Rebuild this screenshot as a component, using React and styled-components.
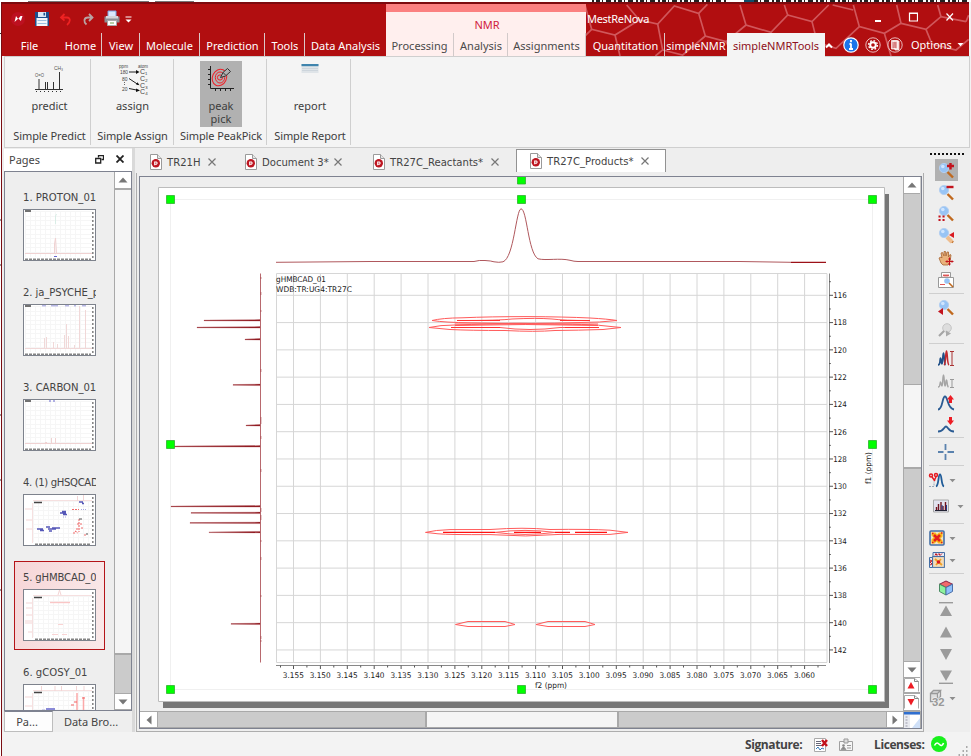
import React from "react";
import styled, { createGlobalStyle, css } from "styled-components";

const Global = createGlobalStyle`
  * { box-sizing: border-box; }
  body { margin: 0; background: #fff; overflow: hidden; }
  svg { display: block; flex: none; }
`;

const ui = `"Noto Sans", "Open Sans", sans-serif`;
const tahoma = `"DejaVu Sans Condensed", "DejaVu Sans", sans-serif`;

/* ---------- window ---------- */
const Desktop = styled.div`
  width: 971px; height: 756px; background: #fff; padding: 2px 0 0 1px;
  position: relative; font-family: ${ui}; font-size: 12px; color: #444;
`;
const Behind = styled.svg`position: absolute; left: 0; top: 0;`;
const Window = styled.div`
  position: relative; height: 754px; width: 970px; display: flex; flex-direction: column;
  background: #f3f3f3; border-left: 1px solid #7a0d12;
`;

/* ---------- title bar ---------- */
const Header = styled.header`
  position: relative; height: 54px; width: 967px; display: flex; background: #b10e10;
  border-top: 2px solid #7d0a0e; flex: none;
`;
const HexPattern = styled.svg`position: absolute; left: 584px; top: 0;`;
const Section = styled.div`
  position: relative; width: ${(p) => p.$w}px; height: 52px; flex: none;
  display: flex; flex-direction: column; background: ${(p) => p.$bg || "transparent"};
  ${(p) => p.$accent && css`border-top: 8px solid #fb8080;`}
`;
const SectionTop = styled.div`flex: 1; display: flex; align-items: center; min-height: 0;`;
const QuickAccess = styled(SectionTop)`padding-left: 8px; gap: 7.400px;`;
const GroupTitle = styled(SectionTop)`
  justify-content: center; color: #d0203c; padding: 4px 0 0 2px; font-size: 11px;
`;
const AppTitle = styled.span`color: #fff; padding-left: 1px; font-size: 11px; letter-spacing: -0.300px; width: 280px;`;
const WinButtons = styled.div`display: flex; align-items: center; gap: 24px;`;
const TabRow = styled.nav`display: flex; height: 23px; flex: none;`;
const Tab = styled.div`
  width: ${(p) => p.$w}px; flex: none; height: ${(p) => (p.$active ? 24 : 23)}px;
  display: flex; align-items: center; justify-content: center; white-space: nowrap;
  padding: 1px 0 0 ${(p) => p.$pl ?? 1}px; font-size: 11px; position: relative;
  color: ${(p) => (p.$active ? "#8e1020" : p.$dark ? "#4a4a4a" : "#fff")};
  background: ${(p) => (p.$active ? "#f4f4f4" : "transparent")};
  border-right: ${(p) => (p.$last ? "0" : p.$dark ? "1px solid #d2caca" : "1px solid #dcc8c8")};
`;
const HeaderTools = styled.div`
  display: flex; align-items: center; flex: 1; color: #fff;
  font-size: 11px;
`;
const OptionsText = styled.span`margin: 0 5px 0 0;`;

/* ---------- ribbon ---------- */
const Ribbon = styled.div`
  height: 92px; width: 966px; margin-left: 2px; flex: none; display: flex;
  background: #f4f4f4; border: 1px solid #cfcfcf;
`;
const RibbonGroup = styled.div`
  width: ${(p) => p.$w}px; height: 86px; margin-top: 2px; border-right: 1px solid #cfcfcf;
  display: flex; flex-direction: column; align-items: center; justify-content: space-between;
  padding: 2px 0 0 ${(p) => p.$pl ?? 1}px; font-size: 11px; white-space: nowrap; color: #3d3d3d;
`;
const RibbonButton = styled.div`
  width: 42px; height: 66px; display: flex; flex-direction: column; align-items: center;
  line-height: 13px; text-align: center; padding-top: 3px;
  background: ${(p) => (p.$active ? "#b1b1b1" : "transparent")};
  svg { margin-bottom: 5px; }
`;
const GroupName = styled.div`line-height: 14px; height: 16px; letter-spacing: -0.100px;`;

/* ---------- body ---------- */
const Body = styled.div`display: flex; height: 584px; width: 968px; flex: none; background: #eee; padding-left: 2px;`;
const Dock = styled.aside`width: 128px; display: flex; flex-direction: column; flex: none; padding-top: 1px;`;
const DockHeader = styled.div`
  height: 22px; background: #fff; display: flex; align-items: center; padding: 0 8px 2px 5px; gap: 12px;
  color: #444; flex: none;
`;
const DockTitle = styled.span`flex: 1; font-size: 11px;`;
const DockList = styled.div`
  height: 540px; border: 1px solid #7e8290; display: flex; overflow: hidden; flex: none; background: #eee;
`;
const Items = styled.div`width: 109px; padding: 9px 0 0 9px; display: flex; flex-direction: column; gap: 6px;`;
const PageItem = styled.div`
  width: 91px; height: 89px; flex: none; padding: 8px 8px 0; border: 1px solid transparent;
  ${(p) => p.$active && css`border-color: #b41418; background: linear-gradient(100deg, #f6d6d8, #fae9e9);`}
`;
const PageLabel = styled.div`
  width: 73px; height: 19px; font: 11.200px/16px ${tahoma};
  letter-spacing: ${(p) => p.$ls || 0}px; white-space: pre; overflow: hidden; color: #444;
`;
const Thumb = styled.div`width: 73px; height: 52px; border: 1px solid #7d828c; background: #fff; overflow: hidden;`;
const DockTabs = styled.div`height: 21px; display: flex; font-size: 11px; color: #444; align-items: center;`;
const DockTab = styled.div`
  width: ${(p) => p.$w}px; height: 21px; display: flex; align-items: center; justify-content: center;
  ${(p) => p.$active && css`background: #fdfdfd; border: 1px solid #bdbdbd; border-top-color: #7e8290; padding-right: 3px;`}
`;

const VScroll = styled.div`width: ${(p) => p.$w}px; display: flex; flex-direction: column; background: #cbcbcb; border-left: 1px solid #a9a9a9; flex: none;`;
const ScrollButton = styled.div`
  width: ${(p) => p.$w || 16}px; height: ${(p) => p.$h || 17}px; background: #fff; border: solid #a9a9a9; flex: none;
  border-width: ${(p) => p.$bw || "0 0 1px"}; display: flex; align-items: center; justify-content: center;
`;
const Rail = styled.div`height: ${(p) => p.$h}; width: ${(p) => p.$w || "auto"}; flex: none;`;
const Handle = styled.div`
  height: ${(p) => p.$h}; width: ${(p) => p.$w || "auto"}; flex: none; background: #f5f5f5;
  border: solid #a9a9a9; border-width: ${(p) => (p.$horizontal ? "0 2px" : "1px 0 2px")};
`;

const Splitter = styled.div`width: 3px; background: #d9d9d9; flex: none;`;
const Center = styled.main`width: 789px; display: flex; flex-direction: column; padding-left: 1px; flex: none;`;
const DocTabs = styled.div`height: 25px; display: flex; align-items: flex-end; padding-left: 5px; flex: none;`;
const DocTab = styled.div`
  width: ${(p) => p.$w}px; height: ${(p) => (p.$active ? 23 : 25)}px; display: flex; align-items: center;
  padding: ${(p) => (p.$active ? "0 0 1px 13px" : "3px 0 0 9px")}; gap: 5px; font: 11.200px ${tahoma}; flex: none;
  margin-bottom: ${(p) => (p.$active ? 1 : 0)}px; white-space: nowrap; color: #444;
  ${(p) => p.$active && css`background: #fff; border: 1px solid #929292; border-bottom: 0;`}
`;
const DocName = styled.span`width: ${(p) => p.$w}px; padding-top: 1px;`;
const OuterFrame = styled.div`
  height: 559px; width: 788px; border: solid #adadad; border-width: 0 1px 1px; padding: 3px 1px 2px 2px; flex: none;
`;
const Viewport = styled.div`
  width: 783px; height: 553px; border: 1px solid #7e8290; display: grid;
  grid-template-columns: 763px 18px; grid-template-rows: 534px 17px;
`;
const HScroll = styled.div`display: flex; background: #cbcbcb; border-top: 1px solid #a9a9a9; border-bottom: 1px solid #a9a9a9;`;
const Corner = styled.div`background: #fff; border: solid #a9a9a9; border-width: 1px 1px 0; display: flex; overflow: hidden;`;

const SideBar = styled.div`width: 44px; display: flex; flex-direction: column; padding-top: 5px; flex: none;`;
const Grip = styled.div`
  height: 6px; width: 34px; margin-left: 6px; flex: none;
  background: repeating-linear-gradient(90deg, #111 0 2px, transparent 2px 4px) 0 0 / 100% 2px no-repeat;
`;
const Tool = styled.div`height: ${(p) => p.$h || 22}px; width: 44px; display: flex; align-items: center; padding-left: ${(p) => (p.$menu ? (p.$wide ? 6 : 2) : 11)}px; flex: none; gap: ${(p) => (p.$wide ? 4 : 0)}px;`;
const ToolFace = styled.div`
  width: 23px; height: 22px; display: flex; align-items: center; justify-content: center; flex: none; padding-right: 1px;
  background: ${(p) => (p.$active ? "#b1b1b1" : "transparent")};
`;
const Divider = styled.div`height: 6px; width: 35px; margin-left: 5px; flex: none; border-top: 2px solid transparent; box-shadow: inset 0 1px #cfcfcf;`;

const Status = styled.footer`
  height: 24px; display: flex; align-items: center; font: bold 12px "Open Sans", sans-serif; color: #444;
  padding: 2px 0 0 743px; flex: none; background: #f3f3f3;
`;
const StatusText = styled.span`letter-spacing: -0.400px; width: ${(p) => p.$w}px; white-space: nowrap; height: 18px; line-height: 18px;`;

/* ---------- small drawings ---------- */
const Arrow = ({ dir = "down", c = "#777" }) => (
  <svg width="10" height="10" viewBox="0 0 10 10">
    <path d={{ up: "M.5 7.5 5 2.5 9.5 7.5z", down: "M.5 2.5 5 7.5 9.5 2.5z", left: "M7.5.5 2.5 5 7.5 9.5z", right: "M2.5.5 7.5 5 2.5 9.5z" }[dir]} fill={c} />
  </svg>
);
const Caret = ({ c = "#8d8d8d" }) => <svg width="7" height="5"><path d="M.5 1h6L3.5 4.2z" fill={c} /></svg>;
const DocIcon = () => (
  <svg width="12" height="16" viewBox="0 0 12 16">
    <path d="M.5.5h7l4 4v11H.5z" fill="#fff" stroke="#9a9a9a" /><path d="M7.5.5v4h4" fill="#e5e5e5" stroke="#9a9a9a" />
    <circle cx="5.8" cy="9.3" r="4.2" fill="#bd1621" /><path d="M4.700 11.200V8h1.700a1.200 1.200 0 0 1 0 2.200H5.200" fill="none" stroke="#fff" strokeWidth="1.100" />
  </svg>
);
const Close = ({ s = 8, c = "#777", w = 1.2 }) => (
  <svg width={s} height={s} viewBox="0 0 8 8"><path d="M.5.5l7 7M7.5.5l-7 7" stroke={c} strokeWidth={w} /></svg>
);
const PageJump = ({ dir }) => (
  <svg width="16" height="14" viewBox="0 0 16 14"><path d="M.5 13.5V.5h10l4 3v10" fill="#fff" stroke="#aaa" /><path d="M10.5.5v3h4" fill="none" stroke="#888" />
    <path d={dir === "up" ? "M3.5 10.5 7 4l3.5 6.5z" : "M3.5 4 7 10.5 10.5 4z"} fill="#ed1c24" /></svg>
);

const HEX = [
  "-183,15 -163,88 -93,105 -20,60 35,72 85,18 158,40 178,108 240,125", "-93,105 -78,168", "-20,60 -58,15", "-163,88 -183,108",
  "35,72 50,150 28,168", "50,150 110,165 178,108", "158,40 184,13", "282,15 300,75 375,97 425,45 415,15", "300,75 240,125 262,168",
  "425,45 498,65 548,15", "498,65 514,128 570,145 640,80", "622,15 640,80 715,100 765,70 752,15", "715,100 735,168",
  "765,70 840,88 885,50 960,65", "840,88 858,132 930,150 968,118", "885,50 875,15", "375,97 392,168", "960,65 968,45", "622,30 560,15",
];
const Quick = () => (
  <>
    <svg width="16" height="18" viewBox="0 0 16 18"><circle cx="8" cy="9" r="7" fill="#bd1020" /><path d="M4.5 12 6 6l2.2 3L10.5 6l2 0-1.6 5-2.5-2.5z" fill="#fff" /></svg>
    <svg width="16" height="16" viewBox="-1 0 16 16"><path d="M1 1h14v14H1z" fill="#1d4f8c" /><path d="M4 1h8v5H4z" fill="#d9e8f6" /><path d="M9.5 1.8h1.6v2.700H9.5z" fill="#1d4f8c" /><path d="M2.500 7h11V15h-11z" fill="#f3f7fb" /><path d="M3.500 9.500h9M3.500 12.500h9" stroke="#9bc0e0" /></svg>
    <svg width="16" height="16" viewBox="-1 0 16 16"><path d="M3 6.500h6c4 0 3.500 5 0 7.500M6.500 3 3 6.500l3.500 3.200" fill="none" stroke="#ee2222" strokeWidth="1.800" /></svg>
    <svg width="16" height="16" viewBox="0 0 16 16"><path d="M12 6.500H8C3.500 6.500 3.500 11 6.500 13.500M9 3l3.500 3.500L9 10" fill="none" stroke="#b9a3a3" strokeWidth="1.800" /></svg>
    <svg width="28" height="17" viewBox="0 0 28 17"><path d="M4 1h8v6H4z" fill="#dbe9fb" stroke="#7aa3dd" /><path d="M.5 6.500h15v6H.5z" fill="#8c8f94" /><path d="M2 6h12v2.500H2z" fill="#d4d6d9" /><path d="M3.500 10.500h9v5h-9z" fill="#fff" stroke="#aaa" /><path d="M6 13h4" stroke="#70a050" /><path d="M21.500 7h6" stroke="#fff" /><path d="M21.500 9.500h6l-3 3z" fill="#fff" /></svg>
  </>
);

const PredictIcon = () => (
  <svg width="32" height="30" viewBox="0 0 32 30">
    <g stroke="#333" fill="none"><path d="M1 25.500h28M5 15v10M11.500 25v-7M13.500 25v-7M19.500 18v7M25.500 8v17" /><path d="M2 27.500h26" strokeDasharray="1 3" /></g>
    <g fill="#555" fontFamily="Liberation Sans" fontSize="6"><text x="1" y="13" textLength="9" lengthAdjust="spacingAndGlyphs">O=O</text><text x="20" y="6" textLength="9" lengthAdjust="spacingAndGlyphs">CH₃</text></g>
  </svg>
);
const AssignIcon = () => (
  <svg width="32" height="30" viewBox="0 0 32 30" overflow="visible">
    <g fill="#444" fontFamily="Liberation Sans" fontSize="5"><text x="2" y="3.500" textLength="9" lengthAdjust="spacingAndGlyphs">ppm</text><text x="21" y="3.500" textLength="10" lengthAdjust="spacingAndGlyphs">atom</text><text x="3" y="10" textLength="8" lengthAdjust="spacingAndGlyphs">180</text><text x="5" y="17">80</text><text x="5" y="27">20</text>
      <g fontSize="7"><text x="23" y="10">C₁</text><text x="23" y="17">C₂</text><text x="23" y="23.500">C₃</text><text x="23" y="30">C₄</text></g></g>
    <path d="M12 8h9M12 14.500l9 6M12 24.500l10 2" stroke="#222" fill="none" /><path d="M19 6l3.500 2-3.500 2zM19 20.500l3.500.800-2-3zM19 24.500l4 2-4 1.500z" fill="#111" /><path d="M7.500 18v4" stroke="#666" strokeDasharray="1 1" />
  </svg>
);
const PickIcon = () => (
  <svg width="28" height="30" viewBox="0 0 28 30">
    <path d="M3.500 2v22.500H27M1 5.500h2M1 10.500h2M1 15.500h2M1 20.500h2M8.500 25v2M13.500 25v2M18.500 25v2M23.500 25v2" stroke="#222" fill="none" />
    <g fill="none" stroke="#f02028"><ellipse cx="12.500" cy="13.500" rx="7" ry="8.500" transform="rotate(25 12.500 13.500)" /><ellipse cx="13" cy="13.500" rx="4.700" ry="5.500" /><circle cx="13" cy="13.500" r="2.600" /></g>
    <path d="M13.500 13.500l2.500-5 4.500-4 3 3-5 4.500z" fill="#b1b1b1" stroke="#333" /><path d="M16 8.500l3 3" stroke="#333" />
  </svg>
);
const ReportIcon = () => (
  <svg width="18" height="30" viewBox="0 0 18 30"><path d="M.5 0h17v9H.5z" fill="#dfe4e8" /><path d="M.5 0h17v2.200H.5z" fill="#3f84ad" /><path d="M1 4.500h16M1 6.500h16" stroke="#cdd5dc" /></svg>
);

const Lens = ({ x = 7, y = 6 }) => (
  <g><path d={`M${x + 3.500} ${y + 4}l5.500 5.500`} stroke="#c0691e" strokeWidth="2.400" /><circle cx={x} cy={y} r="4.600" fill="#98c4f5" stroke="#b4cff0" /><circle cx={x - 1.200} cy={y - 1.500} r="1.800" fill="#cfe5ff" /></g>
);
const icons = {
  zoomIn: <><Lens x={6} y={6} /><path d="M12.500 1v6.500M9 4h7" stroke="#c3131d" strokeWidth="2.400" /></>,
  zoomOut: <><Lens x={6} y={6} /><path d="M8.500 3h7" stroke="#c3131d" strokeWidth="2.400" /></>,
  zoomFit: <><Lens x={6} y={5} /><g fill="none" stroke="#c3131d"><path d="M.5 10.500h2.500M4.500 10.500h2.500M.5 14h2.500M4.500 14h2.500" strokeWidth="2" strokeDasharray="1.800 .400" /></g></>,
  zoomPick: <><Lens x={6} y={5} /><path d="M9 9l5 5" stroke="#efbd8e" strokeWidth="4" /><path d="M11 7l5-3v6z" fill="#d91a20" /></>,
  pan: <><path d="M3 13 1 8l2-1 1 1-1-5 1.500-.500L6 6V1.500h1.500L8 6l1-4h1.500L10.500 7l1.500-2.500 1 .500-1 7-2 3H5z" fill="#e9b27c" stroke="#a76532" strokeWidth=".8" /><path d="M11.500 7.500v8M7.500 11.500h8M10.300 9h2.400M10.300 14h2.400M9 10.300v2.400M14 10.300v2.400" stroke="#c3131d" /></>,
  inset: <><path d="M3.500 6V.500h9V6M.500 5.500h15v10H.500z" fill="#fff" stroke="#999" /><path d="M5 4.500l1-2 1 2 1-2 1 2 1-2 1 2M2 12.500h5" fill="none" stroke="#d55" /><circle cx="9" cy="9" r="2.800" fill="#98c4f5" /><path d="M11 11l4 4" stroke="#c0691e" strokeWidth="1.600" /></>,
  prev: <><Lens x={6} y={5} /><path d="M0 11.500l5-3.500v7z" fill="#c3131d" /></>,
  next: <><circle cx="9" cy="6" r="4.300" fill="#ddd" stroke="#c5c5c5" /><path d="M6 9l-5 5" stroke="#a5a5a5" strokeWidth="2.200" /><path d="M13 11.500l-5-3v6z" fill="#aaa" /></>,
  full: <><path d="M0 15c3 0 1.500-7 2.500-7s.500 6 1.500 6 .500-11 1.500-11 .500 11 2 12" fill="none" stroke="#1f4f87" strokeWidth="1.600" /><path d="M6 15c2-1 1.500-14 2.500-14s.500 13 2.500 14" fill="none" stroke="#c3272d" strokeWidth="1.600" /><path d="M12 1.500h4M12 15.500h4M14 1v14" stroke="#a33" /></>,
  fit: <><path d="M0 15c3 0 1.500-5 2.500-5s.500 4 1.500 4 .500-11 1.500-11 .500 11 1.500 11 .500-6 1.500-6 0 6 2 7" fill="none" stroke="#a5a5a5" strokeWidth="1.400" /><path d="M12 7.500h4M12 15.500h4M14 7v8" stroke="#999" /></>,
  up: <><path d="M0 15.500c5 0 4-13 7-13s2 12 9 13" fill="none" stroke="#2a5b93" strokeWidth="1.800" /><path d="M9 5.500 12.500 1 16 5.500h-2V9h-3V5.500z" fill="#ed1c24" /></>,
  down: <><path d="M0 15.500c6 0 6-5 8-5s2 5 8 5" fill="none" stroke="#2a5b93" strokeWidth="1.800" /><path d="M9 4.500 12.500 9 16 4.500h-2V1h-3v3.500z" fill="#ed1c24" /></>,
  cross: <path d="M7.500 0v6M7.500 10v6M0 8h5.500M9.500 8H16" stroke="#5a82ae" strokeWidth="1.800" />,
  phase: <><path d="M0 14.500h5v-5" fill="none" stroke="#99a8b8" strokeDasharray="2 1" /><g fill="none" stroke="#e51b23" strokeWidth="1.500"><circle cx="2" cy="3.500" r="1.500" /><circle cx="7" cy="3" r="1.500" /><path d="M3 5l3 4M7 5 5 9" /></g><path d="M7 14.500c3-1 2-12 4-12s1 11 4 12" fill="none" stroke="#1f5b98" strokeWidth="1.800" /></>,
  stack: <><path d="M.5 2h15v12H.5z" fill="#e2e2ee" stroke="#aaa" /><path d="M3.500 12V9M5.500 12V6M8 12V4M10 12V8M12.500 12V4" stroke="#701420" strokeWidth="1.400" /><path d="M2 12.500h12" stroke="#223" /><path d="M9 7v5M13.500 7v5" stroke="#223b8a" /></>,
  contour: <><rect x="1" y="1" width="14" height="14" rx="1" fill="#f3e2c8" stroke="#456fa5" strokeWidth="1.600" /><path d="M2.500 2.500h4l1.500 2 2-2h3.500v4l-2 2 2 2v3h-4l-2-2-2 2h-3v-4l2-2-2-2z" fill="#f8b818" /><path d="M5 5l6 6M11 5l-6 6" stroke="#e21d1d" strokeWidth="2.600" /><path d="M12 3h1.500M3 12.500h1.500M3 3.500h1.500M12 12.500h1.500" stroke="#e21d1d" strokeWidth="1.500" /></>,
  map: <><rect x="3.600" y="4.600" width="11.800" height="10.800" fill="#f4dcb8" stroke="#456fa5" /><path d="M.5 5.500h3v10h-3zM4 .5h11.500v4H4z" fill="#e6eaf4" stroke="#456fa5" /><path d="M6 3.500l1-2 1 2 2-2 1 2 2-2M1 8l2 1-2 1 2 2-2 1" fill="none" stroke="#c21824" /><path d="M6 7l7 6M12 7l-5 6" stroke="#f0a024" strokeWidth="1.800" /><circle cx="9.500" cy="10" r="1.800" fill="#d91a20" /></>,
  cube: <><path d="M8 1l6.500 3.200L8 7.500 1.500 4.200z" fill="#f36a6a" stroke="#824" /><path d="M1.500 4.200 8 7.500v7.500l-6.500-3.500z" fill="#8df29d" stroke="#498a63" /><path d="M14.500 4.200 8 7.500v7.500l6.500-3.500z" fill="#8fc0fb" stroke="#4c6fa8" /></>,
  first: <><path d="M1 .700h14" stroke="#9b9b9b" strokeWidth="1.400" /><path d="M2 14 8 3.500 14 14z" fill="#9b9b9b" /></>,
  prior: <path d="M2 13.500 8 2.500l6 11z" fill="#9b9b9b" />,
  later: <path d="M2 3 8 14 14 3z" fill="#9b9b9b" />,
  last: <><path d="M1 15.300h14" stroke="#9b9b9b" strokeWidth="1.400" /><path d="M2 2.500 8 13l6-10.500z" fill="#9b9b9b" /></>,
  cube32: <><path d="M1.500 3.500h7v8h-7zM1.500 3.500l3-3h7l-3 3M11.500.5v6l-3 4" fill="#ddd" stroke="#999" strokeWidth="1.300" /><text x="3" y="15.500" fontFamily="Liberation Sans" fontWeight="bold" fontSize="10" fill="#999" stroke="#eee" strokeWidth="1.500" paintOrder="stroke" textLength="12.500" lengthAdjust="spacingAndGlyphs">32</text></>,
};
const TOOLS = [
  ["zoomIn", { active: true }], ["zoomOut"], ["zoomFit"], ["zoomPick"], ["pan"], ["inset"], null,
  ["prev"], ["next"], null, ["full"], ["fit"], ["up"], ["down"], null, ["cross"], null,
  ["phase", { menu: true }], ["stack", { menu: true, wide: true, h: 30 }], null, ["contour", { menu: true }], ["map", { menu: true }], null,
  ["cube"], ["first"], ["prior"], ["later"], ["last"], ["cube32", { menu: true }],
];
const SideTool = ({ name, opts = {} }) => (
  <Tool $h={opts.h} $menu={opts.menu} $wide={opts.wide}>
    <ToolFace $active={opts.active}><svg width="16" height="16" viewBox="0 0 16 16" overflow="visible">{icons[name]}</svg></ToolFace>
    {opts.menu && <Caret />}
  </Tool>
);

/* ---------- thumbnails ---------- */
const ThumbGrid = ({ inset }) => {
  const x0 = inset ? 9 : 1, y0 = inset ? 6 : 1;
  return (
    <g>
      <path d={Array.from({ length: 12 }, (_, i) => `M${x0 + i * 5 + 0.5} ${y0}V47`).join("") + Array.from({ length: inset ? 9 : 10 }, (_, i) => `M${x0} ${y0 + Math.round(i * 4.500) + 0.500}H68`).join("")} stroke="#f6f6f6" />
      <path d="M68.800 2v46" stroke="#555" strokeWidth="1.600" strokeDasharray="2 2" opacity=".7" /><path d={`M${inset ? 11 : 1} 49.200H67`} stroke="#333" strokeWidth="1.400" strokeDasharray="3 1" opacity=".6" />
      <path d={inset ? "M10 7.500h8" : "M1 1h6"} stroke="#444" strokeWidth="1.500" />
      {inset && <path d="M9 5.500H68M8.500 8v40" stroke="#f6e0e0" />}
    </g>
  );
};
const THUMBS = [
  <g><ThumbGrid /><path d="M1 43.500h67M30.500 43V34l1-6 1 15" stroke="#f0d2d2" fill="none" /><path d="M31.500 14V6l1-2" stroke="#d9ede6" fill="none" /><path d="M30 46.500h3" stroke="#66c" /></g>,
  <g><ThumbGrid /><path d="M1 43.500h67M20.500 43V33M22.500 43V32M29.500 43v-6M33.500 43v-4M40.500 43V30M42.500 43V19M44.500 43V31M50.500 43v-3M55.500 43V1M61.500 43V5" stroke="#f1d8d8" /><path d="M18 .8h4M27 .8h7M41 .8h4M50 .8h2M58 .8h4" stroke="#99d" /></g>,
  <g><ThumbGrid /><path d="M1 43.500h67M27.500 43v-5M31.500 43v-5M21 42.500h2" stroke="#f0d2d2" /><path d="M25 1h2M29 1h2" stroke="#66c" /></g>,
  <g><ThumbGrid inset /><path d="M1 14h7M2 25h6M2 34h6M53.500 1v5M59.500 0v6" stroke="#f3d5d5" />
    <g stroke="#5557b8" strokeWidth="1.300"><path d="M13 34h6M16 35.500h4M22 32h4M24 34h8M28 33h8M25 36h3M36 18h6M38 16.500h4M39 19.500h4" /><path d="M55 7h4M58 8.500h2" /></g>
    <g stroke="#f06a6a" strokeWidth="1.100"><path d="M48 14.500h7M54 25h3M53 29h5M52 34h3M57 33h3M49 38h3M60 40h3M55 27v10M51 36l3 2" strokeDasharray="2 1" /><path d="M39 22h3M57 14.500h5" strokeDasharray="1 1" stroke="#a9a9dd" /></g><path d="M55 24h3M62 39h2" stroke="#555" /></g>,
  <g><ThumbGrid inset /><path d="M34 5l1.500-5 1.500 5M2 13h6M2 18h6M2 25h6M1 31h7M1 33h7M4 42h4" stroke="#f3d5d5" fill="none" /><path d="M26 12.500h20" stroke="#fac6c6" strokeWidth="1.400" /><path d="M34 34.500h5M28 44.500h6M38 44.500h5" stroke="#fad3d3" /></g>,
  <g><ThumbGrid inset /><path d="M17.500 1v5M31 1v5M37.500 1v5M52.500 1v5M60 1v5M1 12h7M1 21h7" stroke="#f3d5d5" /><path d="M53 8v18M59.500 12v14" stroke="#fba9a9" strokeWidth="1.500" /><path d="M47 20h3M50 17h3M58 13h3" stroke="#f06060" strokeWidth="1.200" /><path d="M22 24h9M18 25.500h3" stroke="#66c" strokeWidth="1.300" /></g>,
];
const PAGES = [["1. PROTON_01", 0], ["2. ja_PSYCHE_p", -0.08], ["3. CARBON_01", -0.05], ["4. (1) gHSQCAD", -0.35], ["5. gHMBCAD_0", -0.15], ["6. gCOSY_01", 0]];

/* ---------- spectrum ---------- */
const F2 = Array.from({ length: 20 }, (_, i) => ({ x: 293.8 + i * 26.9, t: (3.155 - i * 0.005).toFixed(3) }));
const F1 = Array.from({ length: 14 }, (_, i) => ({ y: 295.300 + i * 27.280, t: String(116 + i * 2) }));
const PROJ = [[320.500, 204], [327.500, 197], [339.5, 245], [385, 233], [425.5, 246], [446.5, 172], [506.5, 171], [513, 191], [523, 190], [532.300, 209], [624, 231]];
const HANDLES = [[170.500, 199], [521.500, 199], [872.500, 199], [170.500, 444], [872.500, 444], [170.500, 689], [521.500, 689], [872.500, 689]];

const Spectrum = () => (
  <svg width="763" height="534" viewBox="140 177 763 534">
    <path d="M140 177h763v534H140z" fill="#eee" />
    <path d="M163 194h726v514H163z" fill="#777" />
    <path d="M158.500 187.500h726v514h-726z" fill="#fff" stroke="#bcbcbc" />
    <path d="M170.500 199.500h702v490h-702z" fill="none" stroke="#f0f0f0" />
    <g stroke="#d6d6d6" fill="none">
      <path d="M276.500 273.500H827V662.500H276.500z" />
      {F2.map((d) => <path key={d.t} d={`M${d.x - 0.3} 273.500V662.500`} />)}
      {F1.map((d) => <path key={d.t} d={`M276.500 ${d.y}H827`} />)}
    </g>
    <g stroke="#555" fill="none" strokeWidth="1">
      <path d="M829.500 273.500V663M276 665.500H826" stroke="#888" />
      <path d={F1.map((d) => `M829 ${d.y}h4M829 ${d.y - 13.600}h1.800`).join("")} />
      <path d={F2.map((d) => `M${d.x - 0.3} 665.500v3.500M${d.x + 13.100} 665.500v2`).join("") + "M280.500 665.500v2"} />
    </g>
    <g fontFamily='"DejaVu Sans Condensed", "DejaVu Sans", sans-serif' fontSize="7.800" fill="#1a1a1a">
      {F2.map((d) => <text key={d.t} x={d.x - 11} y="678" textLength="21" lengthAdjust="spacingAndGlyphs">{d.t}</text>)}
      {F1.map((d) => <text key={d.t} x="833.300" y={d.y + 2.900} textLength="13.500" lengthAdjust="spacingAndGlyphs">{d.t}</text>)}
      <text x="276" y="282" textLength="50" lengthAdjust="spacingAndGlyphs">gHMBCAD_01</text>
      <text x="276" y="292" textLength="76" lengthAdjust="spacingAndGlyphs">WDB:TR:UG4:TR27C</text>
      <text x="535" y="688" textLength="32" lengthAdjust="spacingAndGlyphs">f2 (ppm)</text>
      <text transform="translate(871 484) rotate(-90)" textLength="32" lengthAdjust="spacingAndGlyphs">f1 (ppm)</text>
    </g>
    <g fill="none" stroke="#b0585d">
      <path d="M276 262.300 370 261.500H474q5-1.500 11-1 6 .3 9 1.300 5 1 9 0c11-4 13-52 18-53 6 0 7 44 17 50 8 2 22-1 32 1.500q4 1.200 8 1.200H740L791 262.300" />
      <path d="M791 262.300h35" stroke="#9c1118" strokeWidth="1.300" />
      <path d="M260.500 273.500V662.500" strokeWidth=".9" />
      <path d="M260.800 277v2M260.800 292v3M260.800 310v2M260.800 369v3M260.800 417v7M260.800 436v3M260.800 469v3M260.800 508v4M260.800 515v5M260.800 540v2M260.800 557v3M260.800 595v2M260.800 636v3M260.800 640v2" />
    </g>
    {PROJ.map(([y, x]) => <path key={y} d={`M${x} ${y - 0.400} 260 ${y - 0.900}V${y + 0.600}L${x} ${y + 0.300}z`} fill="#8f1a20" stroke="#a03238" strokeWidth=".25" />)}
    <g fill="none" stroke="#ff5b5b">
      <path d="M432 320.500Q442 318 462 317.800 490 316.600 527 316.600 565 316.800 590 318 608 319 617 320.500 600 322.500 580 322.500q-50 1.600-110 .3-25-.3-38-2.300z" />
      <path d="M457 320.500Q500 320.500 512 319q25-1.200 40 0 12 1.500 38 1.500" /><path d="M457 320.500H500M560 320.500H590" stroke="#f33" />
      <path d="M429 327.500Q440 325 455 325q70-2.500 80-1.200 60 .5 66 1.700l20 2-18 2q-25 .8-48 1-20 1.600-50 0-35 0-55-1z" />
      <path d="M451 327.500H500q30 4 60 0h38.500M455 325.500q70-2 143 0M455 324H598" /><path d="M451 327.500H500M565 327.500H599" stroke="#f33" />
      <path d="M425.500 532.400Q435 530 450 529.600L490 529.500q34-2.500 60 0 40-.5 60 .7l18 2.200-18 2H560q-34 3-70 .2-40 .2-52-.8z" />
      <path d="M443 532.400H495M514 532.400h27M555 532.400h15M575 532.400h32" stroke="#f11" strokeWidth="1.200" /><path d="M495 532.400q30-4 60 0-30 4-60 0z" />
      <path d="M455.500 624.500 468 621.500h37l10 3-10 2H468zM536 624.500 548 621.500h37l10 3-10 2h-37z" />
    </g>
    <g fill="#0f0" stroke="#2fb02f" strokeWidth=".8">
      {HANDLES.map(([x, y]) => <path key={`${x}-${y}`} d={`M${x - 4} ${y - 3.500}h8v8h-8z`} />)}
      <path d="M517.500 176h8v8h-8z" />
    </g>
  </svg>
);

const PLAIN_TABS = [["File", 53, 2], ["Home", 47, 5], ["View", 38, 1], ["Molecule", 60, 0], ["Prediction", 65, 1], ["Tools", 40, 1], ["Data Analysis", 81, 0]];
const NMR_TABS = [["Processing", 68, 0], ["Analysis", 54, 1], ["Assignments", 78, 0]];
const DOCS = [["TR21H", 95, 36], ["Document 3*", 128, 67], ["TR27C_Reactants*", 152, 96]];

export default function App() {
  return (
    <Desktop>
      <Global />
      <Behind width="971" height="756">
        <path d="M28 1.500h121M155 1.500h39" stroke="#777" /><path d="M0 33.500h1M0 220h1M0 265h1M0 415h1M0 480h1M0 590h1" stroke="#333" />
        <path d="M592 1h136M750 1h220" stroke="#222" strokeWidth="2" strokeDasharray="2 2 4 2 1 3 5 3" /><path d="M744 0h10v2h-10z" fill="#0e4f6c" />
      </Behind>
      <Window>
        <Header>
          <HexPattern width="383" height="52" viewBox="586 4 383 52">
            <g transform="translate(646 0) scale(.33333)" fill="none" stroke="#d0575b" strokeWidth="5">{HEX.map((p) => <polyline key={p} points={p} />)}</g>
          </HexPattern>
          <Section $w={384}>
            <QuickAccess><Quick /></QuickAccess>
            <TabRow>{PLAIN_TABS.map(([t, w, pl], i) => <Tab key={t} $w={w} $pl={pl} $last={i === 0 || i === 6}>{t}</Tab>)}</TabRow>
          </Section>
          <Section $w={200} $bg="#ffefee" $accent>
            <GroupTitle>NMR</GroupTitle>
            <TabRow>{NMR_TABS.map(([t, w, pl]) => <Tab key={t} $w={w} $pl={pl} $dark>{t}</Tab>)}</TabRow>
          </Section>
          <Section $w={383}>
            <SectionTop>
              <AppTitle>MestReNova</AppTitle>
              <WinButtons>
                <svg width="16" height="16"><path d="M9 10h6" stroke="#fff" strokeWidth="2" /></svg>
                <svg width="12" height="16"><path d="M3.500 2h8v8h-8zM3 2.500h9" fill="none" stroke="#fff" strokeWidth="1.200" /></svg>
                <svg width="22" height="16"><path d="M4.500 2.500l6.500 7M11 2.500l-6.500 7" stroke="#fff" strokeWidth="1.200" /></svg>
              </WinButtons>
            </SectionTop>
            <TabRow>
              <Tab $w={79}>Quantitation</Tab>
              <Tab $w={62} $last $pl={0}>simpleNMR</Tab>
              <Tab $w={98} $active $last $pl={0}>simpleNMRTools</Tab>
              <HeaderTools>
                <svg width="86" height="22" viewBox="825 33 86 22">
                  <path d="M826 46.500l3-3 3 3" fill="none" stroke="#fff" strokeWidth="2" />
                  <circle cx="851" cy="44" r="7.200" fill="#1b74ea" stroke="#fff" strokeWidth="1.200" /><path d="M851 42.500v5.500M851 39v2.200M849.500 43h1.500M849 48h4" stroke="#fff" strokeWidth="1.800" />
                  <g fill="none" stroke="#eababc"><circle cx="873" cy="44" r="7.200" /><circle cx="895" cy="44" r="7.200" /></g>
                  <circle cx="873" cy="44" r="2.800" fill="none" stroke="#fff" strokeWidth="2" /><circle cx="873" cy="44" r="4.400" fill="none" stroke="#fff" strokeWidth="1.400" strokeDasharray="1.700 1.750" />
                  <path d="M891.500 39.500h6v8.500h-6zM893 40h6v9h-4z" fill="#f0c8ca" stroke="#fff" strokeWidth=".7" /><path d="M892.500 42h4M892.500 44h4M892.500 46h4" stroke="#b10e10" strokeWidth=".8" />
                </svg>
                <OptionsText>Options</OptionsText><Caret c="#fff" />
              </HeaderTools>
            </TabRow>
          </Section>
        </Header>
        <Ribbon>
          <RibbonGroup $w={86} $pl={4}><RibbonButton><PredictIcon />predict</RibbonButton><GroupName>Simple Predict</GroupName></RibbonGroup>
          <RibbonGroup $w={83}><RibbonButton><AssignIcon />assign</RibbonButton><GroupName>Simple Assign</GroupName></RibbonGroup>
          <RibbonGroup $w={93} $pl={2}><RibbonButton $active><PickIcon />peak<br />pick</RibbonButton><GroupName>Simple PeakPick</GroupName></RibbonGroup>
          <RibbonGroup $w={84} $pl={3}><RibbonButton><ReportIcon />report</RibbonButton><GroupName>Simple Report</GroupName></RibbonGroup>
        </Ribbon>
        <Body>
          <Dock>
            <DockHeader>
              <DockTitle>Pages</DockTitle>
              <svg width="9" height="9"><path d="M3.500 2.500v-2h5v4h-2" fill="none" stroke="#222" strokeWidth="1.300" /><path d="M.700 3.500h5v4.500h-5zM.5 3.500h5.500" fill="none" stroke="#222" strokeWidth="1.300" /></svg>
              <Close c="#222" w={1.800} />
            </DockHeader>
            <DockList>
              <Items>
                {PAGES.map(([p, ls], i) => (
                  <PageItem key={p} $active={i === 4}>
                    <PageLabel $ls={ls}>{p}</PageLabel>
                    <Thumb><svg width="71" height="50">{THUMBS[i]}</svg></Thumb>
                  </PageItem>
                ))}
              </Items>
              <VScroll $w={17}>
                <ScrollButton><Arrow dir="up" /></ScrollButton>
                <Handle $h="466px" /><Rail $h="38px" />
                <ScrollButton $bw="1px 0"><Arrow /></ScrollButton>
              </VScroll>
            </DockList>
            <DockTabs><DockTab $active $w={49}>Pa...</DockTab><DockTab $w={76}>Data Bro...</DockTab></DockTabs>
          </Dock>
          <Splitter />
          <Center>
            <DocTabs>
              {DOCS.map(([t, w, tw]) => <DocTab key={t} $w={w}><DocIcon /><DocName $w={tw}>{t}</DocName><Close /></DocTab>)}
              <DocTab $active $w={150}><DocIcon /><DocName $w={89}>TR27C_Products*</DocName><Close /></DocTab>
            </DocTabs>
            <OuterFrame>
              <Viewport>
                <Spectrum />
                <VScroll $w={18}>
                  <ScrollButton><Arrow dir="up" /></ScrollButton>
                  <Rail $h="190px" /><Handle $h="85px" /><Rail $h="192px" />
                  <ScrollButton $bw="1px 0"><Arrow /></ScrollButton>
                  <ScrollButton $h={16} $bw="0 0 2px"><PageJump dir="up" /></ScrollButton>
                  <ScrollButton $h={17}><PageJump dir="down" /></ScrollButton>
                </VScroll>
                <HScroll>
                  <ScrollButton $w={18} $h={15} $bw="0 1px 0 0"><Arrow dir="left" /></ScrollButton>
                  <Rail $w="267px" $h="15px" /><Handle $horizontal $w="194px" $h="15px" /><Rail $w="267px" $h="15px" />
                  <ScrollButton $w={17} $h={15} $bw="0 0 0 1px"><Arrow dir="right" /></ScrollButton>
                </HScroll>
                <Corner><svg width="16" height="16"><path d="M0 0h16v16H0z" fill="#e8eaf0" /><path d="M1.500 5h2M1.500 8h2M1.500 11h2M1.500 14h2" stroke="#99a" /><path d="M6 3h10v13H6z" fill="#fff" /><path d="M16 6v10H8z" fill="#cfe0f8" /><path d="M0 0h16v2.500H0z" fill="#2f6fd0" /></svg></Corner>
              </Viewport>
            </OuterFrame>
          </Center>
          <SideBar>
            <Grip />
            {TOOLS.map((t, i) => (t ? <SideTool key={t[0]} name={t[0]} opts={t[1]} /> : <Divider key={`d${i}`} />))}
          </SideBar>
        </Body>
        <Status>
          <StatusText $w={69}>Signature:</StatusText>
          <svg width="15" height="16" viewBox="0 0 15 16"><path d="M.5 1.500h11v13H.5z" fill="#fff" stroke="#aaa" /><path d="M2 4.500h5M2 6.500h5M2 8.500h6" stroke="#667" /><path d="M2 12l2-2 2 3 2-2 2 1" fill="none" stroke="#357ab8" /><path d="M8 3l5 6M13 3l-5 6" stroke="#c3131d" strokeWidth="2.400" /></svg>
          <svg width="45" height="16" viewBox="0 0 45 16"><path d="M10.500 4.500h13v9h-13z" fill="#f6f6f6" stroke="#a0a0a0" /><path d="M15 2h4v4h-4z" fill="#ddd" stroke="#999" /><circle cx="14.500" cy="8.500" r="1.300" fill="#888" /><path d="M12 12.500h5l-2.500-3zM18 8.500h4M18 11h4" stroke="#999" fill="#888" /></svg>
          <StatusText $w={49}>Licenses:</StatusText>
          <svg width="47" height="22" viewBox="923 734 47 22"><circle cx="939" cy="744" r="8" fill="#18f01c" /><path d="M934.500 745.500c2-4 3.500-2.500 5-1s3 1.500 4-1.500" fill="none" stroke="#fff" strokeWidth="1.600" />
            <path d="M966 747h1.500M962.500 751h1.500M966 751h1.500M958.500 755h1.500M962.500 755h1.500M966 755h1.500" stroke="#aaa" strokeWidth="2" /></svg>
        </Status>
      </Window>
    </Desktop>
  );
}
